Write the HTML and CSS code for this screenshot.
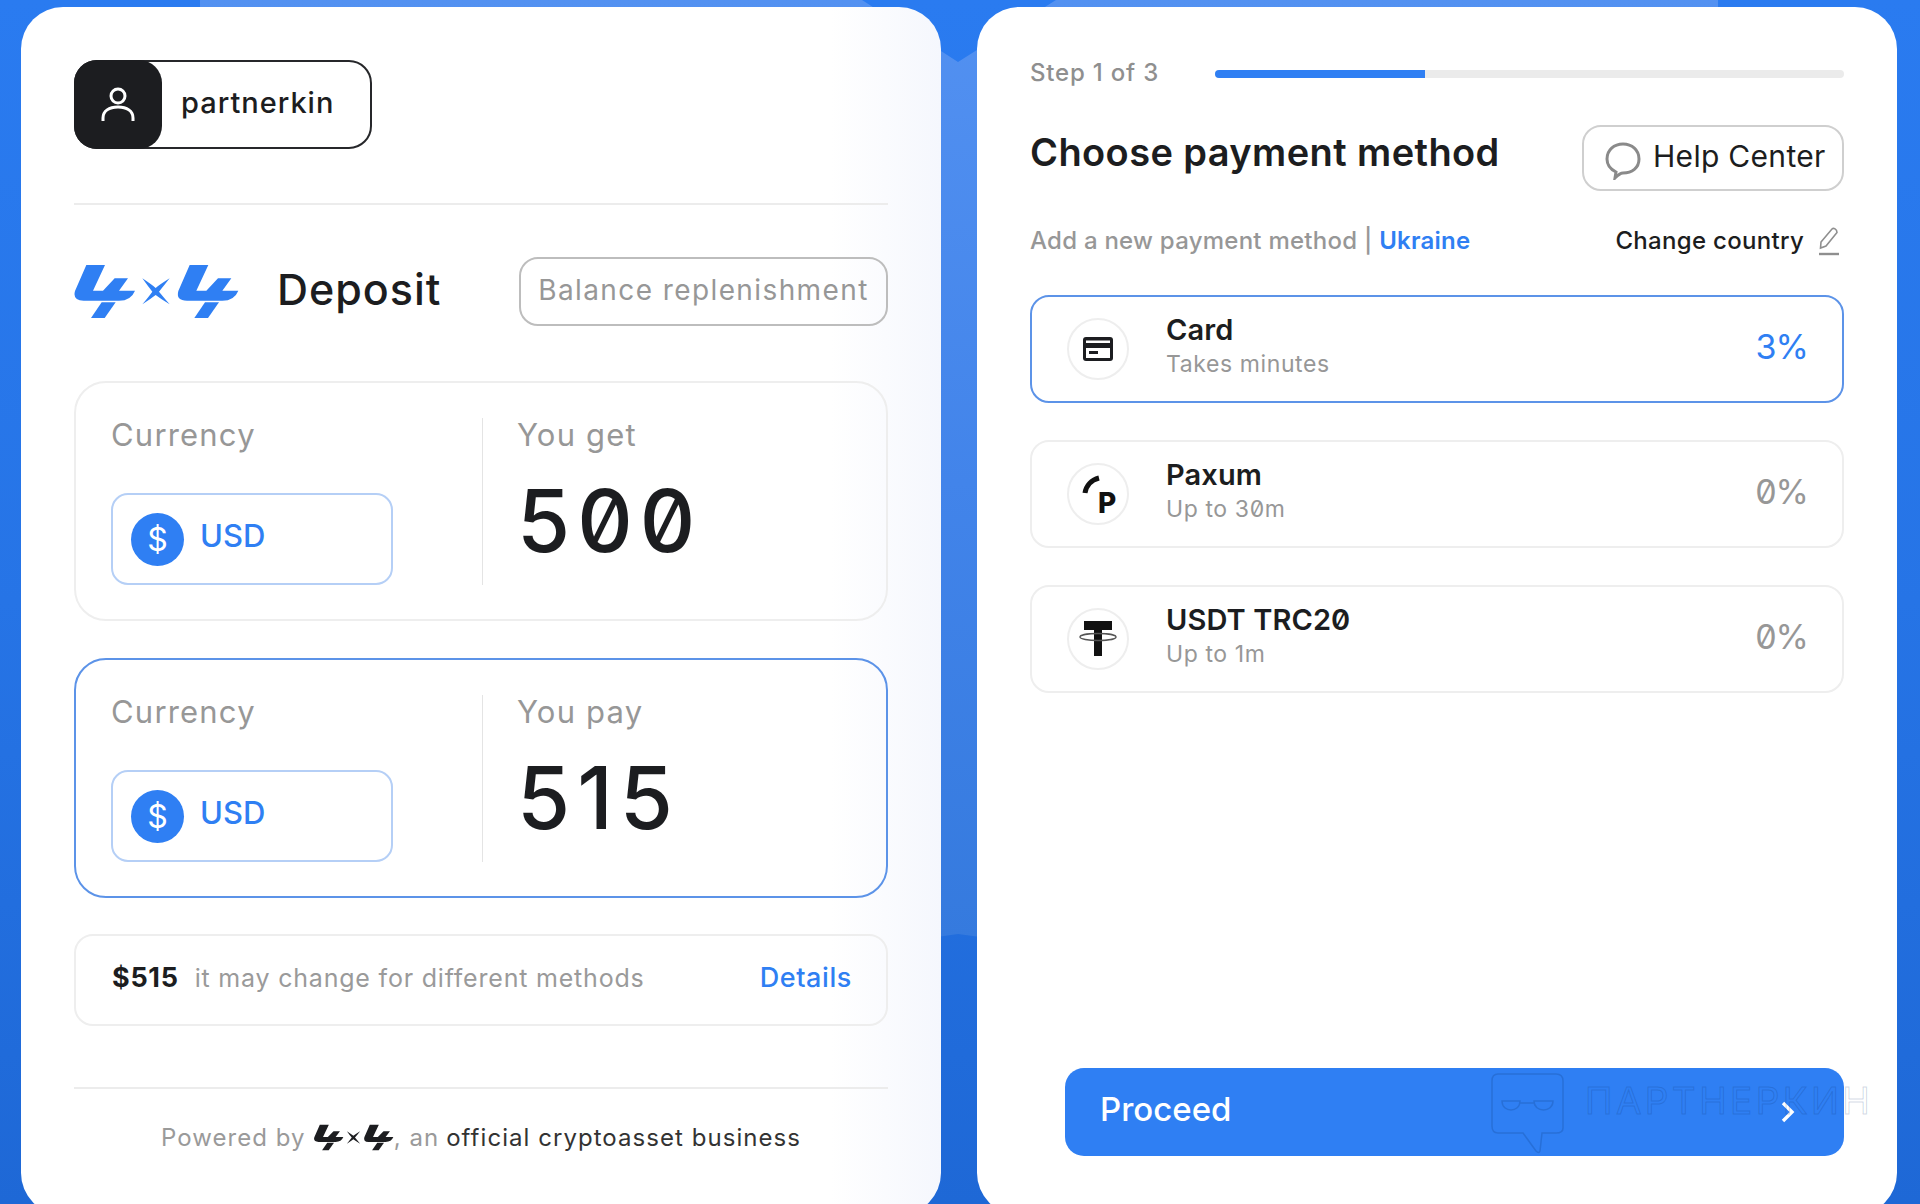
FILE: index.html
```html
<!DOCTYPE html>
<html lang="en">
<head>
<meta charset="utf-8">
<title>Deposit</title>
<link rel="stylesheet" href="styles.css">
</head>
<body>
<svg class="defs" width="0" height="0" aria-hidden="true">
  <symbol id="logo" viewBox="44 45 496 165">
    <g id="four">
      <path d="M80 48H136L100 125H130L165 88H205L178 125H226Q214 155 178 155H72Q38 155 46 126Z"/>
      <path d="M126 160H168L135 207H94Z"/>
    </g>
    <path d="M248 88Q278 108 288 117Q298 108 330 88Q308 116 298 128Q308 140 330 166Q298 146 288 138Q278 146 248 166Q268 142 278 128Q268 116 248 88Z"/>
    <use href="#four" x="310"/>
  </symbol>
</svg>
<div class="page">
  <main class="card card-left">
    <div class="user">
      <span class="avatar">
        <svg width="34" height="36" viewBox="0 0 34 36" fill="none" stroke="#fff" stroke-width="3"><circle cx="17" cy="9" r="7"/><path d="M2 34V31C2 24 8 20 17 20S32 24 32 31V34"/></svg>
      </span>
      <span class="user-name">partnerkin</span>
    </div>
    <div class="rule rule-top"></div>
    <div class="title-row">
      <svg class="logo" width="166" height="55"><use href="#logo"/></svg>
      <h1 class="deposit">Deposit</h1>
      <div class="tag">Balance replenishment</div>
    </div>
    <section class="amount">
      <div class="amount-col">
        <div class="label">Currency</div>
        <div class="select"><span class="coin">$</span><span class="select-text">USD</span></div>
      </div>
      <div class="amount-col amount-right">
        <div class="label">You get</div>
        <div class="value">500</div>
      </div>
    </section>
    <section class="amount amount-active">
      <div class="amount-col">
        <div class="label">Currency</div>
        <div class="select"><span class="coin">$</span><span class="select-text">USD</span></div>
      </div>
      <div class="amount-col amount-right">
        <div class="label">You pay</div>
        <div class="value">515</div>
      </div>
    </section>
    <div class="info">
      <strong class="info-sum">$515</strong>
      <span class="info-text">it may change for different methods</span>
      <a class="info-link">Details</a>
    </div>
    <div class="rule rule-bottom"></div>
    <footer class="powered">
      <span>Powered by</span>
      <svg class="logo-small" width="80" height="27"><use href="#logo"/></svg>
      <span class="comma">, an</span>
      <span class="powered-dark">official cryptoasset business</span>
    </footer>
  </main>

  <main class="card card-right">
    <div class="steps">
      <span class="step-text">Step 1 of 3</span>
      <div class="progress"><div class="progress-fill"></div></div>
    </div>
    <div class="head-row">
      <h2 class="heading">Choose payment method</h2>
      <div class="help">
        <svg class="help-icon" width="36" height="38" viewBox="0 0 36 38" fill="none" stroke="#8a8a8a" stroke-width="3"><path d="M11 30C5 27 2 22 2 17C2 8 9 2 18 2S34 8 34 17S27 31 18 31C16 31 14 32 10 36Z"/></svg>
        <span class="help-text">Help Center</span>
      </div>
    </div>
    <div class="sub-row">
      <span class="sub-text">Add a new payment method | <b class="country">Ukraine</b></span>
      <span class="change">Change country</span>
      <svg class="pencil" width="24" height="30" viewBox="0 0 24 30" fill="none" stroke="#8f8f8f" stroke-width="1.6"><path d="M4 16L15 3C16.500 1.500 20 3 20 6.500L9 20L3.500 22Z"/><path d="M2 28H22" stroke-width="2.4"/></svg>
    </div>

    <article class="method method-active">
      <span class="method-icon">
        <svg width="30" height="24" viewBox="0 0 30 24"><rect width="30" height="24" rx="3" fill="#1c1d20"/><rect x="3" y="3.500" width="24" height="2.500" fill="#fff"/><rect x="3" y="11" width="24" height="10" fill="#fff"/><rect x="6" y="14" width="9" height="3" fill="#1c1d20"/></svg>
      </span>
      <div class="method-body"><div class="method-name">Card</div><div class="method-sub">Takes minutes</div></div>
      <div class="method-fee fee-blue">3%</div>
    </article>
    <article class="method">
      <span class="method-icon">
        <svg width="44" height="56" viewBox="0 -6 44 56"><path d="M9 21C10 14 15 8 23 6" fill="none" stroke="#111" stroke-width="5"/><text class="paxum-p" x="22" y="41">P</text></svg>
      </span>
      <div class="method-body"><div class="method-name">Paxum</div><div class="method-sub">Up to 30m</div></div>
      <div class="method-fee">0%</div>
    </article>
    <article class="method">
      <span class="method-icon">
        <svg width="40" height="38" viewBox="0 0 40 38"><path d="M6 1H34V10H24V36H16V10H6Z" fill="#111"/><ellipse cx="20" cy="17" rx="18" ry="3.500" fill="none" stroke="#555" stroke-width="1.400"/></svg>
      </span>
      <div class="method-body"><div class="method-name">USDT TRC20</div><div class="method-sub">Up to 1m</div></div>
      <div class="method-fee">0%</div>
    </article>

    <button class="proceed" type="button">
      <span class="proceed-text">Proceed</span>
      <svg width="14" height="22" viewBox="0 0 14 22" fill="none" stroke="#fff" stroke-width="3.400"><path d="M2 2L11 11L2 20"/></svg>
    </button>
    <div class="watermark">
      <svg width="76" height="82" viewBox="0 0 76 82" fill="none" stroke="currentColor" stroke-width="1.500"><path d="M8 2H66Q73 2 73 9V56Q73 61 66 61H52L50 79Q49 82 46 79L33 61H8Q2 61 2 54V9Q2 2 8 2Z"/><path d="M12 29H30C30 41 12 41 12 29ZM44 29H63C63 41 44 41 44 29ZM30 31H44"/></svg>
      <span class="watermark-text">ПАРТНЕРКИН</span>
    </div>
  </main>
</div>
</body>
</html>
```

FILE: styles.css
```css
* { box-sizing: border-box; }
html, body { margin: 0; height: 1204px; overflow: hidden; }
body {
  font-family: Inter, "Liberation Sans", sans-serif;
  font-variant-numeric: slashed-zero;
  color: #1c1d20;
  background: linear-gradient(180deg, #2a7bf0 0%, #2674e6 50%, #1e68d6 100%);
}
.defs { position: absolute; }
.page {
  position: relative;
  display: flex;
  gap: 36px;
  height: 1204px;
  padding: 7px 23px 0 21px;
}
.page::before {
  content: "";
  position: absolute;
  inset: 0;
  background: linear-gradient(180deg, #5391f1 0%, #4284ea 40%, #357ade 78%);
  clip-path: polygon(200px 0, 862px 0, 958px 62px, 1056px 0, 1718px 0, 1718px 945px, 1040px 945px, 958px 934px, 880px 945px, 200px 945px);
}
.card {
  position: relative;
  flex: 0 0 920px;
  height: 1208px;
  display: flex;
  flex-direction: column;
  background: #fff;
  border-radius: 42px;
}
.card-left {
  padding: 53px 53px 0;
  background: linear-gradient(90deg, #fff 88%, #f5f7fd 100%);
}
.card-right { padding: 50px 53px 59px 53px; }

/* user chip */
.user {
  display: flex;
  align-items: center;
  width: 298px;
  height: 89px;
  border: 2px solid #26272a;
  border-radius: 23px;
}
.avatar {
  display: flex;
  align-items: center;
  justify-content: center;
  width: 88px;
  height: 89px;
  margin-left: -2px;
  background: #1c1d20;
  border-radius: 23px;
}
.user-name { margin: -4px 0 0 19px; font-size: 29px; font-weight: 500; letter-spacing: 1px; }

.rule { height: 2px; background: #ececec; flex: none; }
.rule-top { margin-top: 54px; }
.rule-bottom { margin-top: 61px; }

/* title */
.title-row { display: flex; align-items: center; height: 69px; margin-top: 52px; }
.logo { color: #2f7ff3; fill: currentColor; }
.deposit { margin: -5px 0 0 37px; font-size: 43px; font-weight: 500; letter-spacing: 1px; }
.tag {
  display: flex;
  align-items: center;
  justify-content: center;
  width: 369px;
  height: 69px;
  margin-left: auto;
  padding-bottom: 3px;
  border: 2px solid #bdbdbd;
  border-radius: 19px;
  color: #979797;
  font-size: 28px;
  letter-spacing: 1.400px;
}

/* amount cards */
.amount {
  display: grid;
  grid-template-columns: 371px 1fr;
  height: 240px;
  flex: none;
  margin-top: 37px;
  padding: 35px 35px;
  border: 2px solid #eeeeee;
  border-radius: 32px;
}
.title-row + .amount { margin-top: 55px; }
.amount-active { border-color: #5c93e8; }
.amount-col { display: flex; flex-direction: column; justify-content: space-between; height: 167px; }
.amount-right { padding-left: 34px; border-left: 1px solid #e4e4e4; justify-content: flex-start; }
.label { color: #979797; font-size: 31px; line-height: 34px; letter-spacing: 1.200px; }
.select {
  display: flex;
  align-items: center;
  gap: 16px;
  width: 282px;
  height: 92px;
  padding-left: 18px;
  border: 2px solid #b5cff6;
  border-radius: 17px;
}
.coin {
  display: flex;
  align-items: center;
  justify-content: center;
  width: 53px;
  height: 53px;
  border-radius: 50%;
  background: #2f7ff3;
  color: #fff;
  font-size: 32px;
}
.select-text { margin-top: -7px; color: #2f7ff3; font-size: 31px; font-weight: 500; }
.value { margin: 17px 0 0; font-size: 86px; line-height: 104px; font-weight: 450; letter-spacing: 7px; }

/* info */
.info {
  display: flex;
  align-items: flex-start;
  height: 92px;
  flex: none;
  margin-top: 36px;
  padding: 26px 34px 0 36px;
  border: 2px solid #eeeeee;
  border-radius: 19px;
  font-size: 25px;
  line-height: 32px;
}
.info-sum { font-size: 27px; font-weight: 700; letter-spacing: 0.700px; }
.info-text { margin-left: 16px; color: #9a9a9a; letter-spacing: 0.800px; }
.info-link { margin-left: auto; color: #2f7ff3; font-size: 27px; font-weight: 500; letter-spacing: 0.600px; }

/* footer */
.powered {
  display: flex;
  align-items: center;
  justify-content: center;
  margin-top: 30px;
  height: 36px;
  color: #9a9a9a;
  font-size: 24px;
  letter-spacing: 1.050px;
}
.logo-small { margin-left: 8px; color: #1c1d20; fill: currentColor; }
.powered-dark { margin-left: 7px; color: #333; }

/* steps */
.steps { display: flex; align-items: center; height: 30px; }
.step-text { width: 185px; color: #8f8f8f; font-size: 24px; font-weight: 500; letter-spacing: 0.800px; }
.progress { flex: 1; height: 8px; margin-top: 4px; background: #ebebeb; border-radius: 4px; overflow: hidden; }
.progress-fill { width: 210px; height: 100%; background: #2f7ff3; }

.head-row { display: flex; justify-content: space-between; height: 66px; margin-top: 38px; }
.heading { margin: 4px 0 0; font-size: 38px; font-weight: 600; line-height: 46px; letter-spacing: 0.400px; }
.help {
  display: flex;
  align-items: center;
  gap: 12px;
  width: 262px;
  height: 66px;
  padding-left: 21px;
  border: 2px solid #cfcfcf;
  border-radius: 19px;
}
.help-icon { margin-top: 6px; }
.help-text { margin-top: -4px; font-size: 30px; letter-spacing: 0.300px; }

.sub-row { display: flex; align-items: center; height: 30px; margin-top: 35px; font-size: 24px; }
.sub-text { margin-top: -2px; color: #979797; font-weight: 500; letter-spacing: 0.250px; }
.country { color: #2f7ff3; font-weight: 600; }
.change { margin: -2px 0 0 auto; font-weight: 500; letter-spacing: 0.300px; }
.pencil { margin: 0 3px 0 13px; }

/* methods */
.method {
  display: flex;
  align-items: center;
  height: 108px;
  flex: none;
  margin-top: 37px;
  padding: 0 34px 0 35px;
  border: 2px solid #eeeeee;
  border-radius: 19px;
}
.sub-row + .method { margin-top: 39px; }
.method-active { border-color: #5c93e8; }
.method-icon {
  display: flex;
  align-items: center;
  justify-content: center;
  width: 62px;
  height: 62px;
  flex: none;
  border: 2px solid #eeeeee;
  border-radius: 50%;
}
.paxum-p { font-size: 28px; font-weight: 800; fill: #111; }
.method-body { margin: -3px 0 0 37px; }
.method-name { margin: -2.500px 0 2.500px; font-size: 29px; line-height: 32px; font-weight: 600; letter-spacing: 0.100px; }
.method-sub { color: #979797; font-size: 23px; line-height: 30px; letter-spacing: 0.600px; }
.method-fee { margin: -6px 0 0 auto; color: #979797; font-size: 34px; letter-spacing: -1px; }
.fee-blue { color: #2f7ff3; }

/* proceed */
.proceed {
  display: flex;
  align-items: center;
  justify-content: space-between;
  width: 779px;
  height: 88px;
  margin: auto 0 0 35px;
  padding: 0 49px 0 35px;
  border: 0;
  border-radius: 19px;
  background: #2f7ff3;
  color: #fff;
  font: 500 33px Inter, "Liberation Sans", sans-serif;
}
.proceed-text { margin-top: -7px; }

/* watermark lying over the button */
.watermark {
  position: absolute;
  left: 513px;
  top: 1065px;
  display: flex;
  align-items: flex-start;
  gap: 19px;
  color: rgba(10, 50, 110, 0.2);
}
.watermark-text {
  margin-top: 9px;
  color: transparent;
  font-size: 37px;
  line-height: 40px;
  letter-spacing: 3.400px;
  -webkit-text-stroke: 1px rgba(10, 50, 110, 0.2);
}
```
